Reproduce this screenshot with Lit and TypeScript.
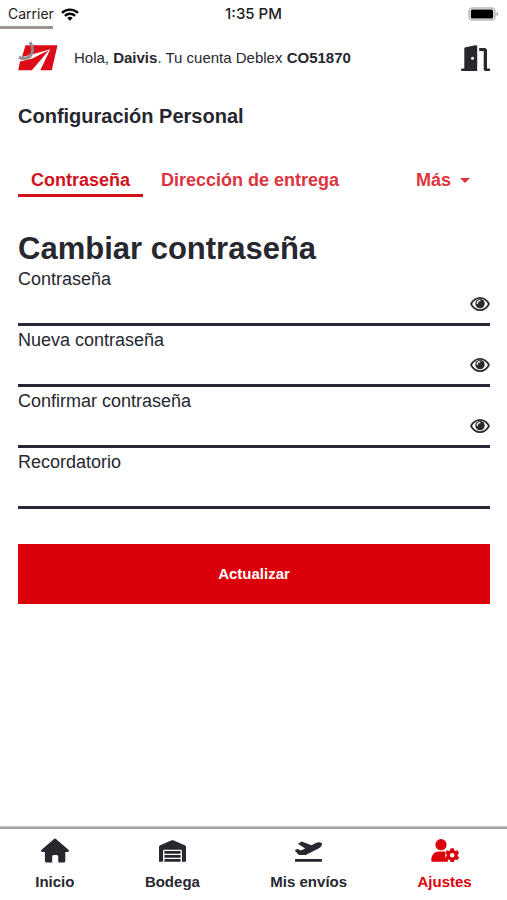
import { LitElement, html, css, svg } from "lit";
import { customElement, property, state } from "lit/decorators.js";
import { classMap } from "lit/directives/class-map.js";

const icons = {
  house: svg`<svg viewBox="0 0 28 25" width="28" height="25" fill="currentColor" aria-hidden="true">
    <path d="M13 .9a1.5 1.5 0 0 1 2 0L27.4 11.8c1 .9.5 2.2-.8 2.2h-2.300v9a1.6 1.6 0 0 1-1.6 1.6h-4.300a1.2 1.2 0 0 1-1.2-1.2v-5a1.5 1.5 0 0 0-1.5-1.5h-3a1.5 1.5 0 0 0-1.5 1.5v5a1.2 1.2 0 0 1-1.2 1.2H5.500A1.6 1.6 0 0 1 3.900 23v-9H1.400C.1 14-.4 12.700.6 11.8z"/></svg>`,
  warehouse: svg`<svg viewBox="0 0 640 512" width="27" height="22" fill="currentColor" aria-hidden="true">
    <path d="M504 352H136.400c-4.400 0-8 3.600-8 8l-.1 48c0 4.400 3.600 8 8 8H504c4.400 0 8-3.600 8-8v-48c0-4.400-3.600-8-8-8zm0 96H136.100c-4.400 0-8 3.600-8 8l-.1 48c0 4.400 3.600 8 8 8h368c4.400 0 8-3.600 8-8v-48c0-4.400-3.600-8-8-8zm0-192H136.600c-4.400 0-8 3.600-8 8l-.1 48c0 4.400 3.600 8 8 8H504c4.400 0 8-3.600 8-8v-48c0-4.400-3.600-8-8-8zm106.500-139L338.400 3.700a48.150 48.150 0 0 0-36.900 0L29.500 117C11.700 124.500 0 141.900 0 161.300V504c0 4.400 3.600 8 8 8h80c4.400 0 8-3.600 8-8V256c0-17.600 14.600-32 32.600-32h382.800c18 0 32.600 14.400 32.600 32v248c0 4.400 3.600 8 8 8h80c4.400 0 8-3.600 8-8V161.300c0-19.400-11.700-36.800-29.500-44.300z"/></svg>`,
  plane: svg`<svg viewBox="0 0 640 512" width="27" height="22" fill="currentColor" aria-hidden="true">
    <path d="M624 448H16c-8.840 0-16 7.160-16 16v32c0 8.840 7.160 16 16 16h608c8.840 0 16-7.160 16-16v-32c0-8.840-7.160-16-16-16zM80.550 341.270c6.280 6.840 15.100 10.720 24.330 10.710l130.540-.18a65.620 65.620 0 0 0 29.640-7.120l290.960-147.650c26.740-13.570 50.710-32.940 67.020-58.310 18.310-28.480 20.300-49.090 13.070-63.650-7.210-14.570-24.740-25.270-58.250-27.450-29.850-1.940-59.540 5.920-86.280 19.480l-98.510 49.990-218.700-82.060a17.799 17.799 0 0 0-18-1.110L90.620 67.290c-10.670 5.410-13.250 19.650-5.170 28.530l156.220 98.100-103.210 52.380-72.350-36.470a17.804 17.804 0 0 0-16.070.020L9.910 230.220c-10.440 5.300-13.190 19.120-5.570 28.080l76.210 82.970z"/></svg>`,
  userGear: svg`<svg viewBox="0 0 28 23" width="28" height="23" fill="currentColor" aria-hidden="true">
    <circle cx="10" cy="5.700" r="5.600"/>
    <path d="M7.800 12.600h4.500c.7 0 1.400.1 2 .3l-.3 1 .8 1.500-.8 1.500.9 2.600 1.700.5.300 2.300.3.500H1.500A1.200 1.200 0 0 1 .3 21.600v-1.500a7.500 7.500 0 0 1 7.500-7.500z"/>
    <path fill-rule="evenodd" d="M19.600 9.200h3.200l.4 2 1.400.8 1.900-.7 1.600 2.800-1.500 1.300v1.600l1.500 1.300-1.600 2.800-1.900-.7-1.400.8-.4 2h-3.200l-.4-2-1.400-.8-1.900.7-1.600-2.800 1.500-1.300v-1.600l-1.500-1.300 1.600-2.800 1.900.7 1.400-.8zm1.600 4.700a2.300 2.300 0 1 0 0 4.600 2.300 2.300 0 0 0 0-4.600z"/></svg>`,
  door: svg`<svg viewBox="0 0 30 28" width="30" height="28" fill="currentColor" aria-hidden="true">
    <path fill-rule="evenodd" d="M14.500 1.200c.9-.2 1.700.3 1.700 1.300V27H1.300C.5 27 0 26.500 0 25.700S.5 24.400 1.300 24.400H3.300V4.800c0-.8.5-1.400 1.300-1.600zM11.500 12.700a1.500 1.500 0 1 0 0 3 1.500 1.500 0 1 0 0-3z"/>
    <path d="M18.200 4h5.300a2.500 2.500 0 0 1 2.500 2.500V24.400h1.700c.9 0 1.500.5 1.500 1.300S28.600 27 27.700 27h-3.200a1.800 1.800 0 0 1-1.800-1.800V7h-4.500z"/></svg>`,
  eye: svg`<svg viewBox="0 0 20 16" width="20" height="16" aria-hidden="true">
    <path d="M1 8C3.200 3.900 6.300 1.900 10 1.900S16.800 3.900 19 8c-2.200 4.100-5.300 6.100-9 6.100S3.200 12.100 1 8z" fill="#fff" stroke="#2b2b2f" stroke-width="1.700" stroke-linejoin="round"/>
    <circle cx="10" cy="7.600" r="4.700" fill="#2b2b2f"/>
    <path d="M7.200 7.400A2.800 2.800 0 0 1 9.900 4.700" fill="none" stroke="#fff" stroke-width="1.300" stroke-linecap="round"/></svg>`,
  logo: svg`<svg viewBox="0 0 40 31" width="40" height="31" role="img" aria-label="Deblex">
    <path d="M7.500 4.300H39.500L33.800 29.200H22.300L32.200 8.500 4 16z" fill="#dd0a17"/>
    <path d="M2.200 20 30.500 9.800 13.800 29.200H.2z" fill="#dd0a17"/>
    <path d="M4 17.600 31.800 8.600 15 17.200 2.500 20.500z" fill="#fff"/>
    <path d="M12 1.200C15.200 6.200 15.600 12 11.500 15.500 8.500 18 4.500 17.800 1 16.300" fill="none" stroke="#8d8b8b" stroke-width="3"/></svg>`,
  wifi: svg`<svg viewBox="0 0 18 13" width="18" height="13" fill="none" stroke="#000" stroke-width="2.400" role="img" aria-label="Wi-Fi">
    <path d="M1 4.900a11.300 11.300 0 0 1 16 0M3.900 7.900a7.200 7.200 0 0 1 10.200 0"/>
    <path d="M9 12.800 6.300 10.100a3.900 3.900 0 0 1 5.400 0z" fill="#000" stroke="none"/></svg>`,
  battery: svg`<svg viewBox="0 0 31 14" width="31" height="14" role="img" aria-label="Batería">
    <rect x="1" y="1" width="26" height="12" rx="3.500" fill="#fff" stroke="#b9b9b9" stroke-width="1.500"/>
    <rect x="2.800" y="2.500" width="22.400" height="9" rx="1.500" fill="#000"/>
    <path d="M28.500 5v4c1-.3 1.700-1 1.700-2s-.7-1.700-1.700-2z" fill="#aaa"/></svg>`,
};

@customElement("password-field")
class PasswordField extends LitElement {
  @property() label = "";
  @property({ type: Boolean }) secret = false;
  @state() private shown = false;

  static styles = css`
    :host { display: block; }
    .label { display: block; font-size: 18px; line-height: 28px; }
    .row { display: flex; align-items: center; height: 30px; border-bottom: 3px solid #272735; }
    .input {
      flex: 1; min-width: 0; height: 30px; padding: 0; border: 0; outline: 0;
      background: transparent; color: inherit; font: inherit; font-size: 18px;
    }
    .toggle {
      display: flex; height: 16px; margin-bottom: 8px; padding: 0;
      border: 0; background: none; cursor: pointer;
    }
  `;

  render() {
    return html`
      <label class="label" for="field">${this.label}</label>
      <div class="row">
        <input class="input" id="field" type=${this.secret && !this.shown ? "password" : "text"} />
        ${this.secret
          ? html`<button class="toggle" type="button" aria-label="Mostrar" @click=${() => (this.shown = !this.shown)}>${icons.eye}</button>`
          : ""}
      </div>
    `;
  }
}

@customElement("app-root")
class AppRoot extends LitElement {
  @state() private tab = 0;

  private fields = [
    { label: "Contraseña", secret: true },
    { label: "Nueva contraseña", secret: true },
    { label: "Confirmar contraseña", secret: true },
    { label: "Recordatorio", secret: false },
  ];

  private links = [
    { label: "Inicio", icon: icons.house },
    { label: "Bodega", icon: icons.warehouse },
    { label: "Mis envíos", icon: icons.plane },
    { label: "Ajustes", icon: icons.userGear, active: true },
  ];

  static styles = css`
    :host {
      display: flex; flex-direction: column; min-height: 100vh;
      background: #fff; color: #272730;
      font-family: "Liberation Sans", Arial, sans-serif;
    }
    .status {
      display: grid; grid-template-columns: 1fr auto 1fr; align-items: center;
      height: 24px; padding: 2px 8px 0;
      font: 14px/24px Inter, sans-serif; color: #222;
    }
    .carrier { display: flex; align-items: center; gap: 7px; }
    .clock { font-size: 15px; font-weight: 500; }
    .battery { display: flex; justify-content: flex-end; }
    .progress { width: 53px; height: 3px; background: #999593; }
    .header { display: flex; align-items: center; height: 58px; padding: 0 16px 0 18px; }
    .logo { display: flex; margin-right: 16px; padding-bottom: 4px; }
    .greeting { flex: 1; margin: 0; font-size: 15px; line-height: 20px; }
    .exit { display: flex; padding: 0; border: 0; background: none; color: inherit; cursor: pointer; }
    .main { flex: 1; padding: 17px 17px 24px 18px; }
    .title { margin: 0 0 38px; font-size: 20px; line-height: 24px; }
    .tabs { display: flex; margin-bottom: 36px; }
    .tab {
      padding: 0 13px; border: 0; border-bottom: 3px solid transparent; background: none;
      color: #dc3540; font: bold 18px/28px "Liberation Sans", Arial, sans-serif;
      white-space: nowrap; cursor: pointer;
    }
    .tab.active { color: #d3101b; border-bottom-color: #d3101b; }
    .tab.more { display: flex; align-items: center; gap: 9px; margin-left: auto; padding: 0 20px; }
    .tab + .tab { padding-left: 18px; }
    .caret { border: 5px solid transparent; border-top-color: currentColor; border-bottom: 0; }
    .heading { margin: 0; font-size: 31px; line-height: 32px; }
    .submit {
      display: block; width: 100%; height: 60px; margin-top: 35px; border: 0;
      background: #dc000b; color: #fff; cursor: pointer;
      font: bold 15px/20px "Liberation Sans", Arial, sans-serif;
    }
    .nav {
      display: flex; justify-content: space-around; height: 73px;
      border-top: 2px solid #a0a0a0; box-sizing: border-box;
      box-shadow: 0 -1px 1px #ccc;
    }
    .link {
      display: flex; flex-direction: column; align-items: center;
      color: inherit; text-decoration: none; font-weight: bold; font-size: 15px; line-height: 20px;
    }
    .link.active { color: #dc000b; }
    .icon { display: flex; align-items: center; height: 43px; }
  `;

  render() {
    return html`
      <div class="status">
        <span class="carrier">Carrier ${icons.wifi}</span>
        <span class="clock">1:35 PM</span>
        <span class="battery">${icons.battery}</span>
      </div>
      <div class="progress"></div>
      <header class="header">
        <span class="logo">${icons.logo}</span>
        <p class="greeting">Hola, <b>Daivis</b>. Tu cuenta Deblex <b>CO51870</b></p>
        <button class="exit" type="button" aria-label="Salir">${icons.door}</button>
      </header>
      <main class="main">
        <h1 class="title">Configuración Personal</h1>
        <div class="tabs">
          ${["Contraseña", "Dirección de entrega"].map(
            (name, i) => html`<button type="button" class=${classMap({ tab: true, active: this.tab === i })}
              @click=${() => (this.tab = i)}>${name}</button>`
          )}
          <button type="button" class="tab more" aria-haspopup="menu">Más <span class="caret"></span></button>
        </div>
        <form @submit=${(e: Event) => e.preventDefault()}>
          <h2 class="heading">Cambiar contraseña</h2>
          ${this.fields.map((f) => html`<password-field label=${f.label} ?secret=${f.secret}></password-field>`)}
          <button class="submit" type="submit">Actualizar</button>
        </form>
      </main>
      <nav class="nav">
        ${this.links.map(
          (l) => html`<a href="#" class=${classMap({ link: true, active: !!l.active })}>
            <span class="icon">${l.icon}</span>${l.label}</a>`
        )}
      </nav>
    `;
  }
}
